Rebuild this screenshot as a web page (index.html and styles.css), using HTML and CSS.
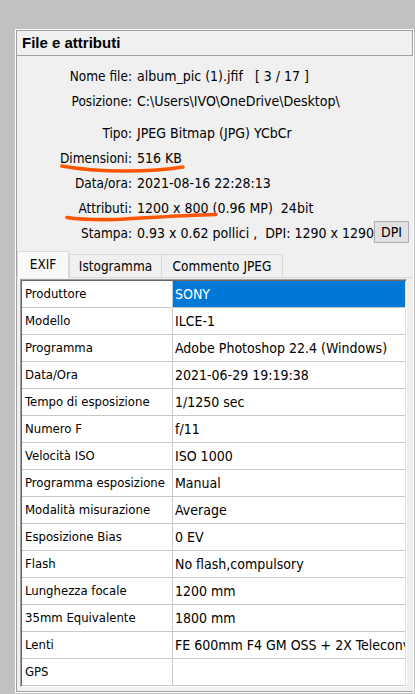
FILE: index.html
```html
<!DOCTYPE html>
<html lang="it">
<head>
<meta charset="utf-8">
<title>File e attributi</title>
<link rel="stylesheet" href="styles.css">
</head>
<body>
<div class="panel">
  <div class="head">File e attributi</div>
  <div class="info">
    <div class="row"><span class="lbl">Nome file:</span><span class="val">album_pic (1).jfif   [ 3 / 17 ]</span></div>
    <div class="row"><span class="lbl">Posizione:</span><span class="val">C:\Users\IVO\OneDrive\Desktop\</span></div>
    <div class="row sep"><span class="lbl">Tipo:</span><span class="val">JPEG Bitmap (JPG) YCbCr</span></div>
    <div class="row"><span class="lbl">Dimensioni:</span><span class="val">516 KB</span></div>
    <div class="row"><span class="lbl">Data/ora:</span><span class="val">2021-08-16 22:28:13</span></div>
    <div class="row"><span class="lbl">Attributi:</span><span class="val">1200 x 800 (0.96 MP)  24bit</span></div>
    <div class="row"><span class="lbl">Stampa:</span><span class="val val-btn"><span>0.93 x 0.62 pollici ,  DPI: 1290 x 1290</span><span class="btn">DPI</span></span></div>
  </div>
  <div class="tabs">
    <div class="tab active">EXIF</div>
    <div class="tab t-isto">Istogramma</div>
    <div class="tab t-comm">Commento JPEG</div>
  </div>
  <div class="grid">
    <div class="tr"><div class="td">Produttore</div><div class="td sel">SONY</div></div>
    <div class="tr"><div class="td">Modello</div><div class="td">ILCE-1</div></div>
    <div class="tr"><div class="td">Programma</div><div class="td">Adobe Photoshop 22.4 (Windows)</div></div>
    <div class="tr"><div class="td">Data/Ora</div><div class="td">2021-06-29 19:19:38</div></div>
    <div class="tr"><div class="td">Tempo di esposizione</div><div class="td">1/1250 sec</div></div>
    <div class="tr"><div class="td">Numero F</div><div class="td">f/11</div></div>
    <div class="tr"><div class="td">Velocità ISO</div><div class="td">ISO 1000</div></div>
    <div class="tr"><div class="td">Programma esposizione</div><div class="td">Manual</div></div>
    <div class="tr"><div class="td">Modalità misurazione</div><div class="td">Average</div></div>
    <div class="tr"><div class="td">Esposizione Bias</div><div class="td">0 EV</div></div>
    <div class="tr"><div class="td">Flash</div><div class="td">No flash,compulsory</div></div>
    <div class="tr"><div class="td">Lunghezza focale</div><div class="td">1200 mm</div></div>
    <div class="tr"><div class="td">35mm Equivalente</div><div class="td">1800 mm</div></div>
    <div class="tr"><div class="td">Lenti</div><div class="td">FE 600mm F4 GM OSS + 2X Teleconv</div></div>
    <div class="tr"><div class="td">GPS</div><div class="td"></div></div>
  </div>
  <svg class="marks" width="397" height="220" viewBox="0 0 397 220">
    <path d="M46 136 C 64 139.5, 84 141, 110 141 C 135 141, 155 139, 167 137" />
    <path d="M51 187.5 C 64 189.5, 80 190, 100 189.5 C 130 188, 160 185.5, 200 184.5" />
  </svg>
</div>
</body>
</html>
```
FILE: styles.css
```css
html, body {
  margin: 0;
  padding: 0;
}
body {
  background: #c1c1c1;
  font-family: "DejaVu Sans Condensed", "DejaVu Sans", sans-serif;
  font-size: 13.5px;
  color: #000;
  overflow: hidden;
  height: 694px;
}
.panel {
  position: relative;
  margin: 29px 0 0 15px;
  width: 397px;
  height: 662px;
  background: #f0f0f0;
  border: 1px solid #fff;
  box-shadow: inset 1px 0 0 #a0a0a0, inset 0 -1px 0 #a0a0a0;
}
.head {
  height: 24px;
  line-height: 24px;
  border: 1px solid #a0a0a0;
  padding-left: 5px;
  font-family: "Liberation Sans", Arial, sans-serif;
  font-weight: bold;
  font-size: 15px;
}
.info {
  padding-top: 8px;
}
.row {
  display: grid;
  grid-template-columns: 116px 1fr;
  column-gap: 5px;
  height: 25px;
  line-height: 25px;
  white-space: pre;
}
.row.sep {
  margin-top: 7px;
}
.lbl {
  text-align: right;
}
.val {
  font-size: 14px;
}
.val-btn {
  display: flex;
  justify-content: space-between;
  align-items: center;
  padding-right: 4px;
}
.btn {
  box-sizing: border-box;
  width: 35px;
  height: 22px;
  line-height: 20px;
  text-align: center;
  background: #e1e1e1;
  border: 1px solid #adadad;
  margin-top: -4px;
}
.marks {
  position: absolute;
  left: 0;
  top: 0;
  fill: none;
  stroke: #ff5400;
  stroke-width: 3.6;
  stroke-linecap: round;
  pointer-events: none;
}
.tabs {
  display: flex;
  align-items: flex-end;
  margin-top: 5px;
  padding-left: 1px;
  height: 26px;
  border-bottom: 1px solid #d9d9d9;
}
.tab {
  box-sizing: border-box;
  height: 23px;
  line-height: 22px;
  text-align: center;
  background: #f0f0f0;
  border: 1px solid #d9d9d9;
  border-bottom: none;
}
.tab.active {
  position: relative;
  z-index: 1;
  width: 52px;
  height: 27px;
  line-height: 24px;
  margin-bottom: -1px;
  background: #f9f9f9;
}
.tab.t-isto {
  width: 93px;
}
.tab.t-comm {
  width: 122px;
  margin-left: -1px;
}
.grid {
  margin: 1px 0 0 4px;
  width: 383px;
  height: 404px;
  padding: 1px;
  background: #fff;
  border-top: 1px solid #a0a0a0;
  border-left: 1px solid #a0a0a0;
  border-right: 1px solid #fff;
  border-bottom: 1px solid #fff;
  box-shadow: inset 1px 1px 0 #696969, inset -1px -1px 0 #e3e3e3;
  overflow: hidden;
  font-size: 13px;
}
.tr {
  display: grid;
  grid-template-columns: 150px 1fr;
  height: 27px;
  box-sizing: border-box;
  border-bottom: 1px solid #c8c8c8;
}
.td {
  line-height: 26px;
  padding-left: 3px;
  white-space: nowrap;
  overflow: hidden;
  text-overflow: clip;
}
.td + .td {
  border-left: 1px solid #c8c8c8;
  padding-left: 2px;
  font-size: 14px;
}
.td.sel {
  background: #0078d7;
  color: #fff;
}
```
